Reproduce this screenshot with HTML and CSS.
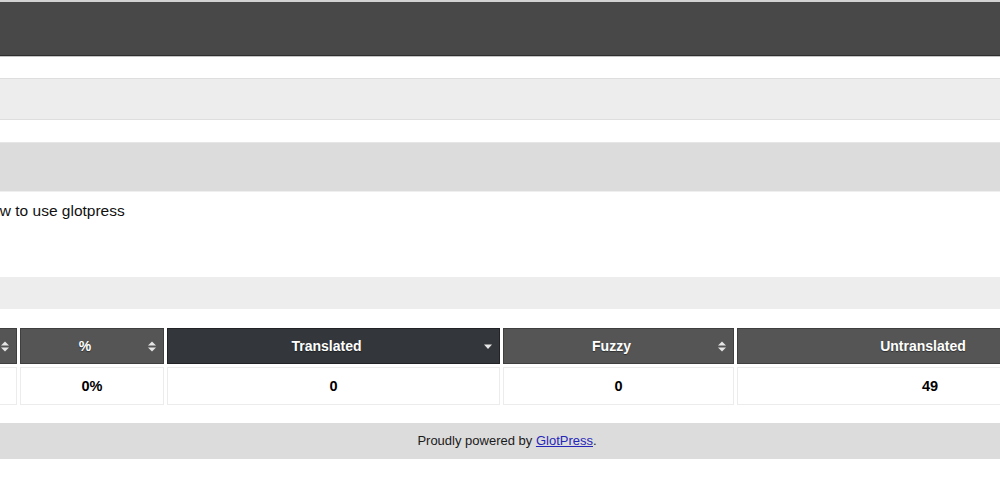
FILE: index.html
```html
<!DOCTYPE html>
<html lang="en">
<head>
<meta charset="utf-8">
<title>GlotPress</title>
<link rel="stylesheet" href="styles.css">
</head>
<body>
<header class="topbar"></header>
<nav class="subnav"></nav>
<div class="page-head"></div>
<p class="desc">How to use glotpress</p>
<div class="tools-bar"></div>

<table class="stats">
  <colgroup>
    <col class="c-locale">
    <col class="c-pct">
    <col class="c-trans">
    <col class="c-fuzzy">
    <col class="c-untrans">
  </colgroup>
  <thead>
    <tr>
      <th><div class="th-in"><span class="label"></span><svg class="sort" viewBox="0 0 8 11"><polygon points="0,4.5 4,0.5 8,4.5"/><polygon points="0,6.5 8,6.5 4,10.5"/></svg></div></th>
      <th><div class="th-in"><span class="label">%</span><svg class="sort" viewBox="0 0 8 11"><polygon points="0,4.5 4,0.5 8,4.5"/><polygon points="0,6.5 8,6.5 4,10.5"/></svg></div></th>
      <th class="active"><div class="th-in"><span class="label">Translated</span><svg class="sort" viewBox="0 0 8 11"><polygon points="0,3.5 8,3.5 4,8"/></svg></div></th>
      <th><div class="th-in"><span class="label">Fuzzy</span><svg class="sort" viewBox="0 0 8 11"><polygon points="0,4.5 4,0.5 8,4.5"/><polygon points="0,6.5 8,6.5 4,10.5"/></svg></div></th>
      <th><div class="th-in"><span class="label">Untranslated</span><svg class="sort" viewBox="0 0 8 11"><polygon points="0,4.5 4,0.5 8,4.5"/><polygon points="0,6.5 8,6.5 4,10.5"/></svg></div></th>
    </tr>
  </thead>
  <tbody>
    <tr>
      <td></td>
      <td>0%</td>
      <td>0</td>
      <td>0</td>
      <td>49</td>
    </tr>
  </tbody>
</table>

<footer class="footer"><p class="footer-text">Proudly powered by <a href="#">GlotPress</a>.</p></footer>
</body>
</html>
```

FILE: styles.css
```css
html, body {
  margin: 0;
  padding: 0;
  overflow: hidden;
  background: #fff;
}
body {
  width: 1000px;
  font-family: "Liberation Sans", Arial, Helvetica, sans-serif;
  color: #111;
}

.topbar {
  height: 53px;
  background: #484848;
  border-top: 2px solid #d2d2d2;
  border-bottom: 1px solid #2e2e2e;
  box-shadow: 0 1px 0 #c4c4c4;
}

.subnav {
  margin-top: 22px;
  height: 40px;
  background: #ededed;
  border-top: 1px solid #dedede;
  border-bottom: 1px solid #dedede;
}

.page-head {
  margin-top: 22px;
  height: 48px;
  background: #dcdcdc;
  border-top: 1px solid #e6e6e6;
  border-bottom: 1px solid #efefef;
}

.desc {
  margin: 9px 0 0 -20px;
  height: 76px;
  font-size: 15.5px;
  line-height: 19px;
  color: #111;
}

.tools-bar {
  height: 32px;
  background: #ededed;
}

.stats {
  margin: 16px 0 0 -46px;
  width: 1172px;
  table-layout: fixed;
  border-collapse: separate;
  border-spacing: 3px;
}
.c-locale { width: 60px; }
.c-pct { width: 144px; }
.c-trans { width: 333px; }
.c-fuzzy { width: 231px; }
.c-untrans { width: 386px; }

.stats th {
  height: 36px;
  padding: 0;
  box-sizing: border-box;
  background: #555;
  border: 1px solid #3f3f3f;
  color: #fff;
  font-size: 14px;
  font-weight: bold;
  text-shadow: 0 1px 1px rgba(0, 0, 0, 0.45);
}
.stats th.active {
  background: #33363a;
  border-color: #202225;
}
.th-in {
  display: flex;
  align-items: center;
  padding: 0 7px 0 1px;
}
.th-in .label {
  flex: 1;
  text-align: center;
}
.sort {
  width: 8px;
  height: 11px;
  flex: none;
  fill: #e6e6e6;
}

.stats td {
  height: 38px;
  padding: 0;
  box-sizing: border-box;
  border: 1px solid #ececec;
  background: #fff;
  text-align: center;
  font-size: 14.5px;
  font-weight: bold;
  color: #000;
}

.footer {
  margin-top: 15px;
  height: 36px;
  background: #dcdcdc;
}
.footer-text {
  margin: 0;
  padding-left: 14px;
  line-height: 36px;
  text-align: center;
  font-size: 13px;
  color: #1a1a1a;
}
.footer-text a {
  color: #2626b8;
  text-decoration: underline;
}
```
